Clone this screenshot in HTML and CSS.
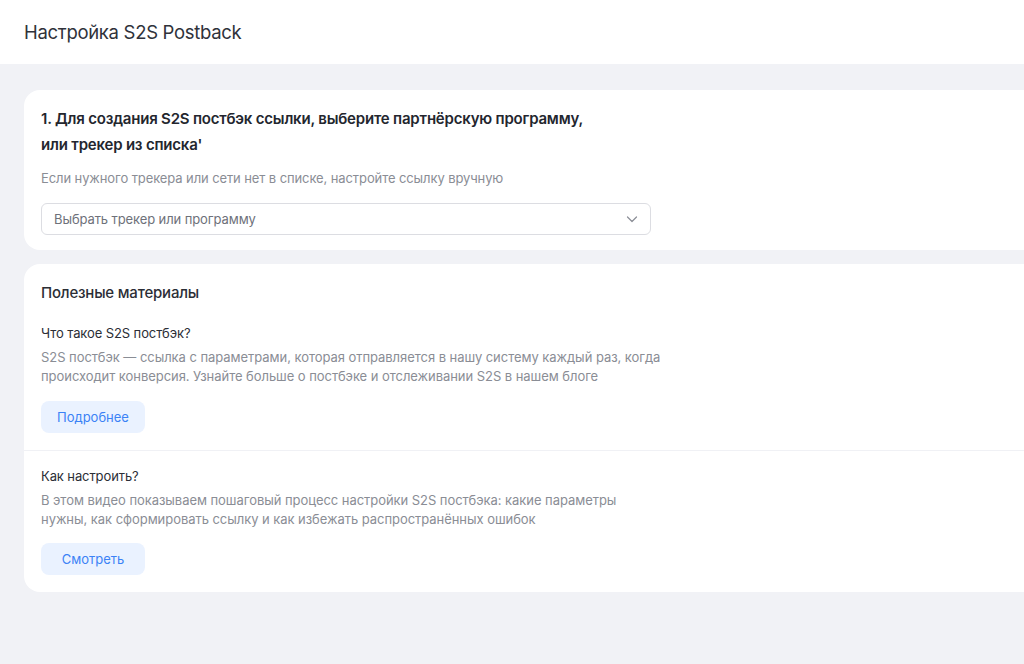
FILE: index.html
```html
<!DOCTYPE html>
<html lang="ru">
<head>
    <meta charset="UTF-8">
    <meta name="viewport" content="width=device-width, initial-scale=1.0">
    <title>Настройка S2S Postback</title>
    <link rel="stylesheet" href="styles.css">
</head>
<body>
    <header class="page-header">
        <h1>Настройка S2S Postback</h1>
    </header>

    <main class="content">
        <section class="card">
            <h2 class="card-title">1. Для создания S2S постбэк ссылки, выберите партнёрскую программу,<br>или трекер из списка'</h2>
            <p class="hint">Если нужного трекера или сети нет в списке, настройте ссылку вручную</p>
            <div class="select">
                <span>Выбрать трекер или программу</span>
                <svg width="12" height="12" viewBox="0 0 12 12" fill="none">
                    <path d="M1.5 4l4.5 4.5L10.5 4" stroke="#8b8e96" stroke-width="1.2" stroke-linecap="round" stroke-linejoin="round"/>
                </svg>
            </div>
        </section>

        <section class="card materials">
            <h2 class="materials-title">Полезные материалы</h2>

            <div class="material">
                <h3>Что такое S2S постбэк?</h3>
                <p>S2S постбэк — ссылка с параметрами, которая отправляется в нашу систему каждый раз, когда<br>происходит конверсия. Узнайте больше о постбэке и отслеживании S2S в нашем блоге</p>
                <button class="soft-button">Подробнее</button>
            </div>

            <div class="material">
                <h3>Как настроить?</h3>
                <p>В этом видео показываем пошаговый процесс настройки S2S постбэка: какие параметры<br>нужны, как сформировать ссылку и как избежать распространённых ошибок</p>
                <button class="soft-button">Смотреть</button>
            </div>
        </section>
    </main>
</body>
</html>
```

FILE: styles.css
```css
body {
    font-family: Inter, "Noto Sans", sans-serif;
    background-color: #f1f2f6;
    color: #2b2e36;
    margin: 0;
    min-height: 100vh;
    overflow-x: hidden;
}

.page-header {
    background: #fff;
    height: 64px;
    padding: 0 24px;
    display: flex;
    align-items: center;
}

.page-header h1 {
    margin: 0;
    font-size: 18.5px;
    font-weight: 400;
    color: #2f323a;
    letter-spacing: -0.3px;
}

.content {
    padding: 26px 0 0 24px;
    display: flex;
    flex-direction: column;
    gap: 14px;
}

.card {
    background: #fff;
    border-radius: 16px;
    margin-right: -24px;
    padding: 16px 17px 15px;
}

.card-title {
    margin: 0;
    font-size: 15px;
    font-weight: 600;
    line-height: 26px;
    color: #23262e;
    letter-spacing: -0.2px;
}

.hint {
    margin: 10px 0 0;
    font-size: 13px;
    line-height: 20px;
    color: #8a8d95;
    letter-spacing: -0.1px;
}

.select {
    margin-top: 15px;
    width: 584px;
    height: 30px;
    border: 1px solid #dcdde2;
    border-radius: 6px;
    display: flex;
    align-items: center;
    justify-content: space-between;
    padding: 0 12px;
    font-size: 13px;
    color: #6e717a;
    letter-spacing: -0.1px;
}

.materials {
    padding: 17px 0 0 0;
}

.materials-title {
    margin: 0;
    padding: 0 17px;
    font-size: 15px;
    font-weight: 500;
    line-height: 24px;
    color: #2b2e36;
    letter-spacing: -0.2px;
}

.material {
    padding: 18px 17px 17px;
}

.material + .material {
    border-top: 1px solid #f0f1f5;
    padding-top: 15px;
    padding-bottom: 17px;
}

.material + .material .soft-button {
    margin-top: 14px;
}

.material h3 {
    margin: 0;
    font-size: 13px;
    font-weight: 400;
    line-height: 20px;
    color: #2b2e36;
    letter-spacing: -0.1px;
}

.material p {
    margin: 5px 0 0;
    font-size: 13px;
    line-height: 19px;
    color: #8a8d95;
    letter-spacing: -0.05px;
}

.soft-button {
    margin-top: 15px;
    background: #eaf2ff;
    color: #3b82f6;
    border: none;
    border-radius: 8px;
    height: 32px;
    width: 104px;
    font-family: inherit;
    font-size: 13px;
    cursor: pointer;
    display: block;
}

.soft-button:hover {
    background: #dde9fd;
}
```
